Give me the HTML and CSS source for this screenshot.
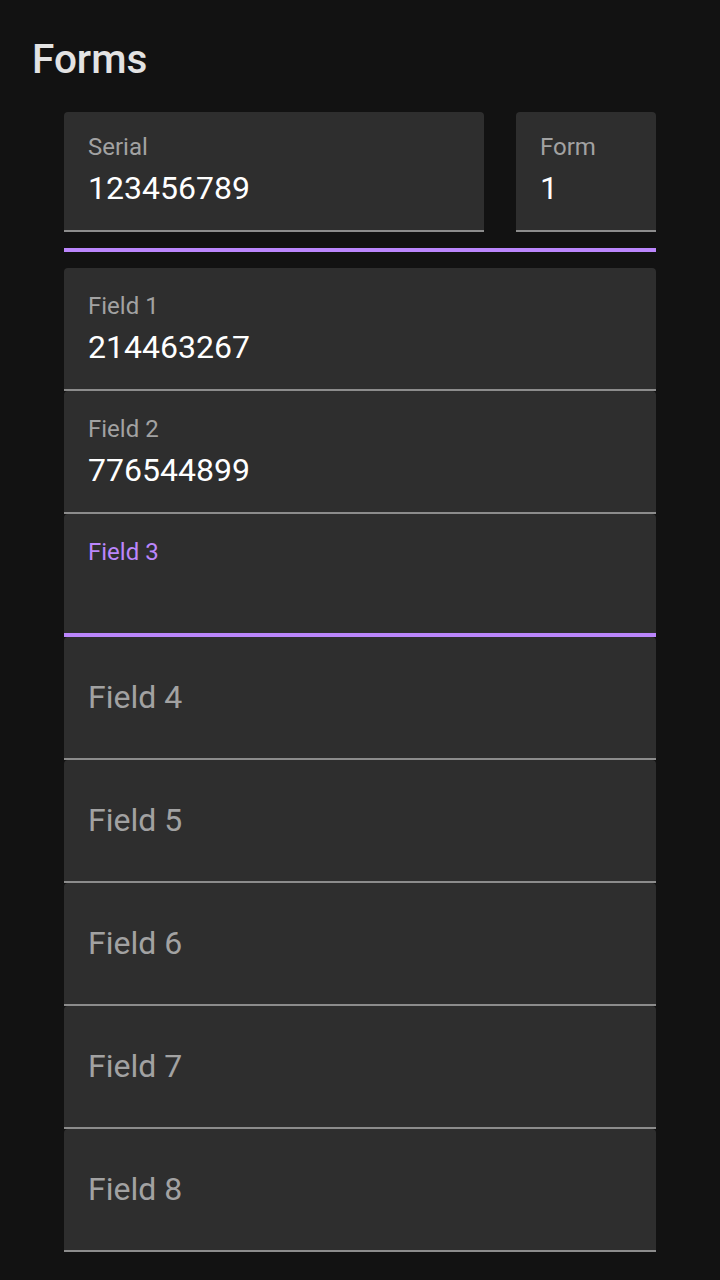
FILE: index.html
```html
<!DOCTYPE html>
<html lang="en">
<head>
<meta charset="utf-8">
<title>Forms</title>
<link rel="stylesheet" href="styles.css">
</head>
<body>
<header class="header">
  <h1 class="title">Forms</h1>
</header>
<main class="forms">
  <div class="top-row">
    <div class="field field-top field-serial">
      <div class="label">Serial</div>
      <div class="value">123456789</div>
    </div>
    <div class="field field-top field-form">
      <div class="label">Form</div>
      <div class="value">1</div>
    </div>
  </div>
  <div class="divider"></div>
  <div class="list">
    <div class="field field-item">
      <div class="label">Field 1</div>
      <div class="value">214463267</div>
    </div>
    <div class="field field-item">
      <div class="label">Field 2</div>
      <div class="value">776544899</div>
    </div>
    <div class="field field-item focused">
      <div class="label">Field 3</div>
      <div class="value"></div>
    </div>
    <div class="field field-item empty"><div class="placeholder">Field 4</div></div>
    <div class="field field-item empty"><div class="placeholder">Field 5</div></div>
    <div class="field field-item empty"><div class="placeholder">Field 6</div></div>
    <div class="field field-item empty"><div class="placeholder">Field 7</div></div>
    <div class="field field-item empty"><div class="placeholder">Field 8</div></div>
  </div>
</main>
</body>
</html>
```

FILE: styles.css
```css
html, body {
  margin: 0;
  padding: 0;
  background: #121212;
}

body {
  font-family: Roboto, "Liberation Sans", sans-serif;
  width: 720px;
  height: 1280px;
  overflow: hidden;
}

.header {
  padding: 35px 0 0 32px;
}

.title {
  margin: 0;
  font-size: 40.5px;
  line-height: 48px;
  font-weight: 500;
  color: #e3e3e3;
}

.forms {
  margin: 29px 64px 0 64px;
}

.top-row {
  display: flex;
  gap: 32px;
}

.field {
  box-sizing: border-box;
  background: #2e2e2e;
  border-radius: 4px 4px 0 0;
  border-bottom: 2px solid #8c8c8c;
  padding-left: 24px;
}

.field-top {
  height: 120px;
  padding-top: 21px;
}

.field-serial {
  flex: 0 0 420px;
}

.field-form {
  flex: 0 0 140px;
}

.label {
  font-size: 24px;
  line-height: 28px;
  color: #a2a2a2;
}

.value {
  margin-top: 8px;
  font-size: 32px;
  line-height: 38px;
  height: 38px;
  color: #ffffff;
}

.divider {
  height: 4px;
  background: #bb86fc;
  margin: 16px 0;
}

.list {
  display: flex;
  flex-direction: column;
}

.field-item {
  height: 123px;
  padding-top: 24px;
}

.field-item.focused {
  border-bottom: 4px solid #bb86fc;
}

.field-item.focused .label {
  color: #bb86fc;
}

.field-item.empty {
  padding-top: 41px;
}

.placeholder {
  font-size: 32px;
  line-height: 38px;
  color: #a2a2a2;
}
```
